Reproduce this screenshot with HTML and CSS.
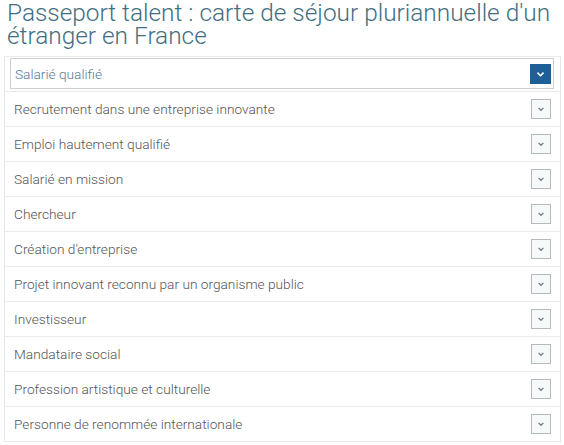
FILE: index.html
```html
<!DOCTYPE html>
<html lang="fr">
<head>
<meta charset="utf-8">
<link rel="stylesheet" href="styles.css">
</head>
<body>
<h1 class="title">Passeport talent : carte de séjour pluriannuelle d'un étranger en France</h1>
<div class="list">
  <div class="row row-active">
    <div class="inner">
      <span class="label">Salarié qualifié</span>
      <span class="btn btn-active"><svg viewBox="0 0 20 20" width="20" height="20"><path d="M6.8 8.6 L10 11.8 L13.2 8.6" fill="none" stroke="#fff" stroke-width="1.7"/></svg></span>
    </div>
  </div>
  <div class="row"><span class="label">Recrutement dans une entreprise innovante</span><span class="btn"><svg viewBox="0 0 20 20" width="20" height="20"><path d="M7.3 8.7 L10 11.4 L12.7 8.7" fill="none" stroke="#6f7a80" stroke-width="1.4"/></svg></span></div>
  <div class="row"><span class="label">Emploi hautement qualifié</span><span class="btn"><svg viewBox="0 0 20 20" width="20" height="20"><path d="M7.3 8.7 L10 11.4 L12.7 8.7" fill="none" stroke="#6f7a80" stroke-width="1.4"/></svg></span></div>
  <div class="row"><span class="label">Salarié en mission</span><span class="btn"><svg viewBox="0 0 20 20" width="20" height="20"><path d="M7.3 8.7 L10 11.4 L12.7 8.7" fill="none" stroke="#6f7a80" stroke-width="1.4"/></svg></span></div>
  <div class="row"><span class="label">Chercheur</span><span class="btn"><svg viewBox="0 0 20 20" width="20" height="20"><path d="M7.3 8.7 L10 11.4 L12.7 8.7" fill="none" stroke="#6f7a80" stroke-width="1.4"/></svg></span></div>
  <div class="row"><span class="label">Création d'entreprise</span><span class="btn"><svg viewBox="0 0 20 20" width="20" height="20"><path d="M7.3 8.7 L10 11.4 L12.7 8.7" fill="none" stroke="#6f7a80" stroke-width="1.4"/></svg></span></div>
  <div class="row"><span class="label">Projet innovant reconnu par un organisme public</span><span class="btn"><svg viewBox="0 0 20 20" width="20" height="20"><path d="M7.3 8.7 L10 11.4 L12.7 8.7" fill="none" stroke="#6f7a80" stroke-width="1.4"/></svg></span></div>
  <div class="row"><span class="label">Investisseur</span><span class="btn"><svg viewBox="0 0 20 20" width="20" height="20"><path d="M7.3 8.7 L10 11.4 L12.7 8.7" fill="none" stroke="#6f7a80" stroke-width="1.4"/></svg></span></div>
  <div class="row"><span class="label">Mandataire social</span><span class="btn"><svg viewBox="0 0 20 20" width="20" height="20"><path d="M7.3 8.7 L10 11.4 L12.7 8.7" fill="none" stroke="#6f7a80" stroke-width="1.4"/></svg></span></div>
  <div class="row"><span class="label">Profession artistique et culturelle</span><span class="btn"><svg viewBox="0 0 20 20" width="20" height="20"><path d="M7.3 8.7 L10 11.4 L12.7 8.7" fill="none" stroke="#6f7a80" stroke-width="1.4"/></svg></span></div>
  <div class="row"><span class="label">Personne de renommée internationale</span><span class="btn"><svg viewBox="0 0 20 20" width="20" height="20"><path d="M7.3 8.7 L10 11.4 L12.7 8.7" fill="none" stroke="#6f7a80" stroke-width="1.4"/></svg></span></div>
</div>
</body>
</html>
```
FILE: styles.css
```css
html, body {
  margin: 0;
  padding: 0;
  background: #fff;
}
body {
  font-family: Roboto, "Liberation Sans", sans-serif;
}
.title {
  margin: 0 0 9px 0;
  padding: 1px 2px 0 7px;
  font-size: 24.4px;
  font-weight: 300;
  line-height: 23px;
  color: #3f6f82;
}
.list {
  margin-left: 4px;
  width: 555px;
  border: 1px solid #e6e6e6;
  border-top-color: #ececec;
}
.row {
  display: flex;
  align-items: center;
  justify-content: space-between;
  height: 35px;
  box-sizing: border-box;
  border-top: 1px solid #ebebeb;
  padding: 0 9px 0 9px;
}
.row:first-child {
  border-top: none;
}
.row-active {
  height: 34px;
  padding: 1px 6px 2px 5px;
}
.inner {
  flex: 1;
  height: 31px;
  box-sizing: border-box;
  border: 1px solid #cfcfcf;
  display: flex;
  align-items: center;
  justify-content: space-between;
  padding: 0 2px 0 4px;
}
.label {
  font-size: 13.7px;
  font-weight: 300;
  color: #555;
}
.row-active .label {
  color: #56799a;
}
.btn {
  width: 20px;
  height: 20px;
  box-sizing: border-box;
  border: 1px solid #b4b9bc;
  background: #f6f9fa;
  display: flex;
  align-items: center;
  justify-content: center;
}
.btn svg {
  display: block;
}
.btn-active {
  width: 21px;
  background: #1f5f97;
  border-color: #1f5f97;
}
```
